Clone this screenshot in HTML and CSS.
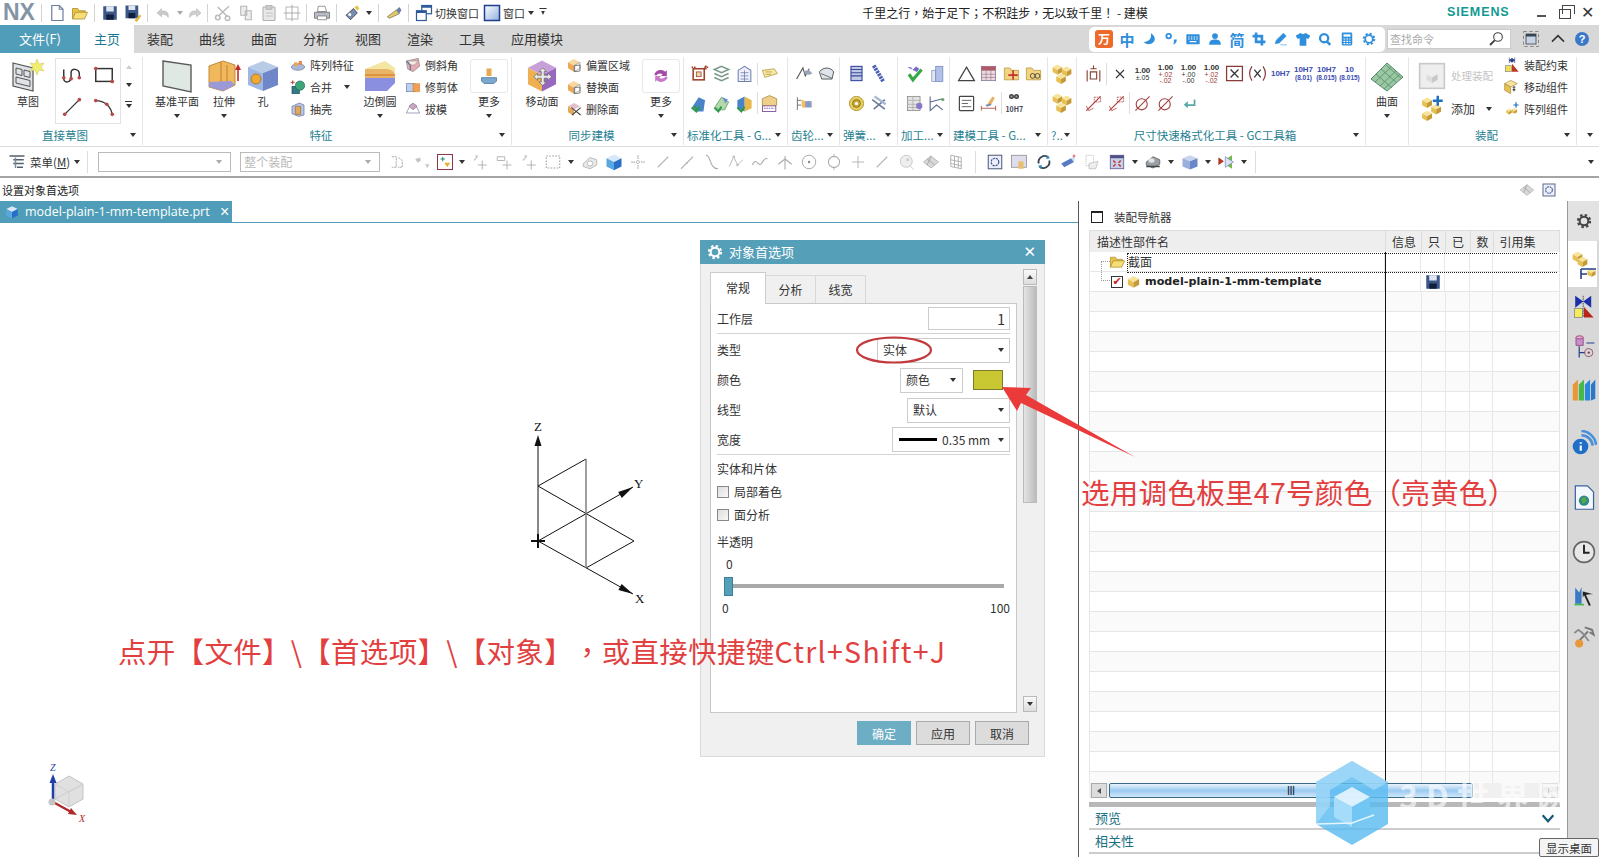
FILE: index.html
```html
<!DOCTYPE html>
<html lang="zh-CN">
<head>
<meta charset="utf-8">
<title>NX 建模</title>
<link rel="stylesheet" href="styles.css">
</head>
<body>
<svg class="defs" aria-hidden="true">
<defs>
<symbol id="cube" viewBox="0 0 24 24"><polygon points="12,3 21,8 12,13 3,8" fill="var(--a,#f7e49a)"/><polygon points="3,8 12,13 12,22 3,17" fill="var(--b,#e8c050)"/><polygon points="21,8 12,13 12,22 21,17" fill="var(--c,#c49a38)"/></symbol>
<symbol id="gear" viewBox="0 0 24 24"><circle cx="12" cy="12" r="9" fill="none" stroke="currentColor" stroke-width="3.4" stroke-dasharray="3.6 3.47"/><circle cx="12" cy="12" r="6.5" fill="none" stroke="currentColor" stroke-width="3"/></symbol>
<symbol id="doc" viewBox="0 0 24 24"><path d="M5 2h10l5 5v15H5z" fill="#fff" stroke="#6a7f9e" stroke-width="1.6"/><path d="M15 2v5h5" fill="none" stroke="#6a7f9e" stroke-width="1.4"/></symbol>
<symbol id="folder" viewBox="0 0 24 24"><path d="M2 20V6h7l2 3h8v3" fill="#e8c24a" stroke="#a88a20"/><path d="M2 20l4-9h16l-4 9z" fill="#f6dd7a" stroke="#a88a20"/></symbol>
<symbol id="save" viewBox="0 0 24 24"><rect x="3" y="3" width="18" height="18" fill="#3d5688"/><rect x="7" y="3" width="10" height="7" fill="#dfe6f2"/><rect x="7" y="14" width="10" height="7" fill="#10203c"/></symbol>
<symbol id="saveas" viewBox="0 0 24 24"><rect x="2" y="2" width="17" height="17" fill="#3d5688"/><rect x="6" y="2" width="9" height="6" fill="#dfe6f2"/><rect x="6" y="12" width="9" height="7" fill="#10203c"/><path d="M14 22l7-8 2 2-6 8z" fill="#e2b93c"/></symbol>
<symbol id="undo" viewBox="0 0 24 24"><path d="M19 18c1-7-3-10-9-8V6L4 12l6 5v-3c3-1 6 0 9 4z" fill="#c9c9c9" stroke="#aaa" stroke-width=".6"/></symbol>
<symbol id="redo" viewBox="0 0 24 24"><path d="M5 18c-1-7 3-10 9-8V6l6 6-6 5v-3c-3-1-6 0-9 4z" fill="#d0d0d0" stroke="#aaa" stroke-width=".6"/></symbol>
<symbol id="cut" viewBox="0 0 24 24"><path d="M20 3L7 15M5 4l12 12" stroke="#bbb" stroke-width="2" fill="none"/><circle cx="5" cy="18" r="3" fill="none" stroke="#bbb" stroke-width="2"/><circle cx="18" cy="19" r="3" fill="none" stroke="#bbb" stroke-width="2"/></symbol>
<symbol id="copy" viewBox="0 0 24 24"><path d="M5 3h8v12H5zM11 9h8v12h-8z" fill="#eee" stroke="#b5b5b5" stroke-width="1.4"/></symbol>
<symbol id="paste" viewBox="0 0 24 24"><rect x="4" y="4" width="16" height="18" rx="1" fill="#e8e8e8" stroke="#b0b0b0" stroke-width="1.4"/><rect x="8" y="2" width="8" height="5" fill="#ccc" stroke="#aaa"/><path d="M8 12h9M8 16h9" stroke="#b5b5b5"/></symbol>
<symbol id="movew" viewBox="0 0 24 24"><rect x="4" y="4" width="16" height="16" fill="none" stroke="#b5b5b5" stroke-width="1.3"/><path d="M12 1v22M1 12h22" stroke="#aaa" stroke-width="1.3"/></symbol>
<symbol id="print" viewBox="0 0 24 24"><path d="M7 3h9l2 7H6z" fill="#fff" stroke="#777"/><path d="M2 11h20v8H2z" fill="#b8bcc4" stroke="#666"/><path d="M6 16h12v5H6z" fill="#fff" stroke="#777"/></symbol>
<symbol id="wand" viewBox="0 0 24 24"><path d="M4 15l10-9 5 6-9 9z" fill="#7a8bb0" stroke="#334"/><path d="M15 4l4-2 3 4-3 3z" fill="#e8c84a"/><circle cx="9" cy="14" r="2" fill="#fff"/></symbol>
<symbol id="pen" viewBox="0 0 24 24"><path d="M3 17l12-9 4 5-13 6z" fill="#e2c766" stroke="#776"/><path d="M15 8l4-4 3 4-3 5z" fill="#6a7ea6"/></symbol>
<symbol id="wsw" viewBox="0 0 24 24"><rect x="9" y="2" width="13" height="11" fill="#fff" stroke="#2d5a98" stroke-width="1.6"/><rect x="2" y="9" width="13" height="13" fill="#fff" stroke="#2d5a98" stroke-width="1.6"/><rect x="2" y="9" width="13" height="3" fill="#2d5a98"/><rect x="9" y="2" width="13" height="3" fill="#2d5a98"/></symbol>
<symbol id="win" viewBox="0 0 24 24"><defs><linearGradient id="wg" x1="0" y1="0" x2="1" y2="1"><stop offset="0" stop-color="#fff"/><stop offset="1" stop-color="#8fb0e0"/></linearGradient></defs><rect x="2" y="2" width="20" height="20" fill="url(#wg)" stroke="#1f3f8a" stroke-width="2"/></symbol>
<symbol id="sgmoon" viewBox="0 0 24 24"><path d="M15 2c2 8-2 14-12 15 6 7 18 4 19-5 0-4-3-8-7-10z" fill="currentColor"/></symbol>
<symbol id="sgdots" viewBox="0 0 24 24"><circle cx="8" cy="7" r="4" fill="none" stroke="currentColor" stroke-width="3"/><path d="M17 13h5c0 4-2 7-6 9 1-3 1-5 1-9z" fill="currentColor"/></symbol>
<symbol id="sgkey" viewBox="0 0 24 24"><rect x="2" y="5" width="20" height="15" rx="1" fill="currentColor"/><path d="M5 9h2M9 9h2M13 9h2M17 9h2M5 12h2M9 12h2M13 12h2M17 12h2M7 16h10" stroke="#fff" stroke-width="1.8"/></symbol>
<symbol id="sgman" viewBox="0 0 24 24"><circle cx="12" cy="7" r="5" fill="currentColor"/><path d="M2 22c0-7 4-9 10-9s10 2 10 9z" fill="currentColor"/></symbol>
<symbol id="sgcrop" viewBox="0 0 24 24"><path d="M7 1v16h16M1 7h16v16" fill="none" stroke="currentColor" stroke-width="4.5"/></symbol>
<symbol id="sgpen" viewBox="0 0 24 24"><path d="M2 20l2-6L16 2l5 5L9 19zM11 22h11" fill="currentColor" stroke="currentColor"/></symbol>
<symbol id="sgshirt" viewBox="0 0 24 24"><path d="M8 3l4 2 4-2 7 4-3 5-3-1v11H7V11l-3 1-3-5z" fill="currentColor"/></symbol>
<symbol id="sgfind" viewBox="0 0 24 24"><circle cx="10.500" cy="10.500" r="7" fill="none" stroke="currentColor" stroke-width="4"/><path d="M15 16l6 6" stroke="currentColor" stroke-width="4.500"/></symbol>
<symbol id="sgcalc" viewBox="0 0 24 24"><rect x="3" y="1" width="18" height="22" rx="2" fill="currentColor"/><rect x="6" y="4" width="12" height="4" fill="#fff"/><path d="M6 12h3M11 12h3M16 12h2M6 16h3M11 16h3M16 16h2M6 20h3M11 20h3M16 20h2" stroke="#fff" stroke-width="2"/></symbol>
<symbol id="sketch" viewBox="0 0 34 34"><path d="M2 4l20 5v23L2 27z" fill="#dfe2e6" stroke="#555" stroke-width="1.2"/><path d="M5 9l6 1.5v6L5 15zM13 11l6 1.5v6l-6-1.5zM5 18l14 3.5v6L5 24z" fill="none" stroke="#555"/><path d="M26 0l2 5 5-1-3 4 3 4-5-1-2 5-2-5-5 1 3-4-3-4 5 1z" fill="#f0ee70" stroke="#c9c050" stroke-width=".5"/></symbol>
<symbol id="spline" viewBox="0 0 24 24"><path d="M3 6v10c0 5 8 5 8-2V9c0-5 9-4 9 2v4" fill="none" stroke="#333" stroke-width="1.6"/><circle cx="3" cy="15" r="2" fill="#b94a4a"/><circle cx="11" cy="16" r="2" fill="#b94a4a"/><circle cx="20" cy="15" r="2" fill="#b94a4a"/></symbol>
<symbol id="rect" viewBox="0 0 24 24"><rect x="3" y="5" width="18" height="14" fill="none" stroke="#333" stroke-width="1.6"/><circle cx="3" cy="5" r="2" fill="#b94a4a"/><circle cx="21" cy="19" r="2" fill="#b94a4a"/></symbol>
<symbol id="line" viewBox="0 0 24 24"><path d="M4 20L20 4" stroke="#333" stroke-width="1.4"/><circle cx="4" cy="20" r="2" fill="#b94a4a"/><circle cx="20" cy="4" r="2" fill="#b94a4a"/></symbol>
<symbol id="arc" viewBox="0 0 24 24"><path d="M3 5c9 0 17 6 18 16" fill="none" stroke="#333" stroke-width="1.4"/><circle cx="3" cy="5" r="2" fill="#b94a4a"/><circle cx="15" cy="9" r="2" fill="#b94a4a"/><circle cx="21" cy="20" r="2" fill="#b94a4a"/></symbol>
<symbol id="plane" viewBox="0 0 34 34"><path d="M3 2l28 4v27L3 27z" fill="#dfe8e2" stroke="#5b5b5b" stroke-width="1.4"/></symbol>
<symbol id="extrude" viewBox="0 0 34 34"><path d="M2 7l14-5 12 4v20l-12 6L2 28z" fill="#f0b85c" stroke="#c28a38"/><path d="M14 3v28M20 6v24" stroke="#c97c30" fill="none"/><path d="M2 28l14 4 12-6-4-4-22 1z" fill="#9a9ad8"/><path d="M31 22V9" stroke="#c02a2a" stroke-width="1.6"/><path d="M31 5l-3 6h6z" fill="#c02a2a"/></symbol>
<symbol id="hole" viewBox="0 0 34 34"><polygon points="17,2 32,8 17,14 2,8" fill="#b8cce8"/><polygon points="2,8 17,14 17,32 2,26" fill="#9db8e4"/><polygon points="32,8 17,14 17,32 32,26" fill="#6f86c8"/><circle cx="10" cy="20" r="5" fill="#eea838" stroke="#b97a20"/></symbol>
<symbol id="edge" viewBox="0 0 34 34"><path d="M2 10l20-8 10 7v10H2z" fill="#f2e6a0"/><path d="M2 10h20c6 0 10 2 10 9H2z" fill="#e8b46a"/><path d="M2 19h30v5l-8 8H2z" fill="#8b8fe0"/><path d="M2 16h30" stroke="#d98a30" stroke-width="1.5"/></symbol>
<symbol id="pat" viewBox="0 0 24 24"><ellipse cx="12" cy="15" rx="10" ry="5" fill="#a9b8d8" stroke="#6e7ea0"/><rect x="6" y="8" width="5" height="6" fill="#e8a850"/><rect x="13" y="6" width="5" height="6" fill="#e88a50"/></symbol>
<symbol id="unite" viewBox="0 0 24 24"><rect x="3" y="11" width="11" height="11" fill="#317c88" stroke="#1c5058"/><circle cx="15" cy="10" r="7" fill="#3fa67c" stroke="#1f6a4e"/><path d="M1 5h6M4 2v6" stroke="#c03030" stroke-width="1.4"/></symbol>
<symbol id="shell" viewBox="0 0 24 24"><path d="M3 8l11-5 7 3v15l-8 2-10-4z" fill="#b8c8e8" stroke="#5a6a90"/><path d="M8 8h8v12H8z" fill="#e2a860" stroke="#9a6a30"/></symbol>
<symbol id="cham" viewBox="0 0 24 24"><path d="M2 6l18-4 2 12-10 8-8-4z" fill="#e8a8b0" stroke="#888"/><path d="M4 6l16 0-6 6H8z" fill="#f4efe0" stroke="#999"/><path d="M2 6l6 6v8" stroke="#6a7a9a" stroke-width="2" fill="none"/></symbol>
<symbol id="trim" viewBox="0 0 24 24"><rect x="2" y="7" width="12" height="12" fill="#bcd0ee" stroke="#6a7ea8"/><rect x="12" y="7" width="10" height="12" fill="#f0a050" stroke="#c07028" stroke-dasharray="2 1"/></symbol>
<symbol id="dft" viewBox="0 0 24 24"><polygon points="8,6 16,6 22,18 2,18" fill="#fff" stroke="#8a8aa8" stroke-width="1.2"/><polygon points="12,3 18,8 12,13 6,8" fill="#c9a8c0" stroke="#8a6a88"/></symbol>
<symbol id="more1" viewBox="0 0 24 24"><rect x="9" y="3" width="6" height="9" fill="#e8a850"/><path d="M3 14h18v4l-3 3H6l-3-3z" fill="#7ba8cc" stroke="#4a7ca4"/></symbol>
<symbol id="movef" viewBox="0 0 46 46"><polygon points="23,2 42,12 23,22 4,12" fill="#c8a0d8"/><polygon points="4,12 23,22 23,44 4,34" fill="#eeb050"/><polygon points="42,12 23,22 23,44 42,34" fill="#9868c0"/><path d="M24 12l5 5h-3v5h5v-3l5 5-5 5v-3h-5v5h3l-5 5-5-5h3v-5h-5v3l-5-5 5-5v3h5v-5h-3z" fill="#e8e8e8" stroke="#666"/></symbol>
<symbol id="more2" viewBox="0 0 24 24"><path d="M4 11c1-6 9-8 13-4l2-2v7h-7l2-2c-3-2-6-1-7 1z" fill="#a648a8"/><path d="M20 13c-1 6-9 8-13 4l-2 2v-7h7l-2 2c3 2 6 1 7-1z" fill="#c878c8"/></symbol>
<symbol id="xoff" viewBox="0 0 24 24"><polygon points="12,3 21,8 12,13 3,8" fill="#f7d8a0"/><polygon points="3,8 12,13 12,22 3,17" fill="#eea858"/><polygon points="21,8 12,13 12,22 21,17" fill="#fff" stroke="#888"/><path d="M13 13l8-1v9l-8 1z" fill="none" stroke="#444"/></symbol>
<symbol id="xx" viewBox="0 0 24 24"><polygon points="12,3 21,8 12,13 3,8" fill="#e4c0c8"/><polygon points="3,8 12,13 12,22 3,17" fill="#e4a858"/><path d="M8 10l14 11M22 10L9 21" stroke="#444" stroke-width="1.6"/></symbol>
<symbol id="redbox" viewBox="0 0 24 24"><rect x="4" y="6" width="14" height="14" fill="none" stroke="#a0432c" stroke-width="2"/><rect x="8" y="10" width="6" height="6" fill="#e8d8b0" stroke="#a0432c"/><path d="M2 4h5M18 4h5M20 2v5" stroke="#a0432c" stroke-width="2" stroke-dasharray="2 1"/></symbol>
<symbol id="stack" viewBox="0 0 24 24"><path d="M3 7l9-4 9 4-9 4zM3 12l9 4 9-4M3 17l9 4 9-4" fill="none" stroke="#7a9a8a" stroke-width="2"/></symbol>
<symbol id="bldg" viewBox="0 0 24 24"><path d="M4 8l8-5 8 5v14H4z" fill="#eef" stroke="#6a80a8" stroke-width="1.3"/><path d="M7 11h10M7 15h10M7 19h10M12 8v14" stroke="#6a80a8"/></symbol>
<symbol id="tag" viewBox="0 0 24 24"><path d="M3 8l15-2 4 6-16 5z" fill="#f5e8a8" stroke="#b89a40"/><path d="M7 10h8M7 13h7" stroke="#b89a40"/></symbol>
<symbol id="gblu" viewBox="0 0 24 24"><path d="M3 16l8-12 8 4-2 14H8z" fill="#4a84c8"/><path d="M10 20l-5-5M2 17l6 5 4-6" stroke="#2e9a48" stroke-width="2.5" fill="none"/></symbol>
<symbol id="ggrn" viewBox="0 0 24 24"><path d="M4 16l8-12 9 6-5 10H8z" fill="#b4d8a8" stroke="#5a9a60"/><path d="M13 4l7 3-3 5z" fill="#6a8ad0"/><path d="M3 17l5 5 4-6" stroke="#2e9a48" stroke-width="2.5" fill="none"/></symbol>
<symbol id="gyel" viewBox="0 0 24 24"><polygon points="12,3 21,8 21,18 12,22" fill="#e8b848"/><polygon points="12,3 3,8 3,18 12,22" fill="#4a84c8"/><path d="M3 17l5 5 4-6" stroke="#2e9a48" stroke-width="2.5" fill="none"/></symbol>
<symbol id="ychk" viewBox="0 0 24 24"><polygon points="12,2 21,6 21,14 12,18 3,14 3,6" fill="#f0d088" stroke="#a88a40"/><rect x="3" y="15" width="17" height="7" fill="#fff" stroke="#6a3a8a"/><path d="M5 18h13" stroke="#6a3a8a" stroke-dasharray="2 1"/></symbol>
<symbol id="pt" viewBox="0 0 24 24"><path d="M2 19L10 5l3 10 5-9" fill="none" stroke="#555" stroke-width="1.4"/><path d="M12 9c5-3 8 0 10 3-4 2-7 2-10 0z" fill="#9aa6b8"/></symbol>
<symbol id="ptw" viewBox="0 0 24 24"><path d="M3 10c5-7 15-6 18 0l-2 9H6z" fill="#dfe4ec" stroke="#555" stroke-width="1.2"/><path d="M5 12l14 6" stroke="#555"/></symbol>
<symbol id="bars" viewBox="0 0 24 24"><rect x="5" y="3" width="14" height="18" fill="#c0c8e8" stroke="#3a4a98" stroke-width="1.4"/><path d="M5 7h14M5 11h14M5 15h14" stroke="#3a4a98" stroke-width="1.4"/></symbol>
<symbol id="spr" viewBox="0 0 24 24"><path d="M6 2l12 20" stroke="#4a60b8" stroke-width="5" stroke-dasharray="3 1"/></symbol>
<symbol id="nut" viewBox="0 0 24 24"><circle cx="12" cy="12" r="9" fill="#e8d060" stroke="#a08a20"/><circle cx="12" cy="12" r="5" fill="#c8a838" stroke="#806a10"/><circle cx="12" cy="12" r="2" fill="#fff"/></symbol>
<symbol id="hand" viewBox="0 0 24 24"><path d="M3 4v16M3 8h5M3 14h5" stroke="#555"/><rect x="12" y="9" width="9" height="8" fill="#8a9ac8"/><path d="M8 7l5 2v8H9z" fill="#f0c060"/></symbol>
<symbol id="sprx" viewBox="0 0 24 24"><path d="M4 7l16 12M20 7L6 19" stroke="#6a7a98" stroke-width="2"/><path d="M7 3l14 10" stroke="#a8b8d0" stroke-width="3"/></symbol>
<symbol id="grnchk" viewBox="0 0 24 24"><path d="M3 4l5 0 1 4 5-5 4 3-3 4z" fill="#7a6ac8"/><path d="M5 13l5 7L21 7" fill="none" stroke="#38a848" stroke-width="4"/></symbol>
<symbol id="stk" viewBox="0 0 24 24"><rect x="6" y="8" width="5" height="14" fill="#dfe6f0" stroke="#8a9ac0"/><rect x="11" y="3" width="9" height="19" fill="#b0c0e8" stroke="#7a8ac0"/></symbol>
<symbol id="tbl" viewBox="0 0 24 24"><rect x="3" y="3" width="16" height="18" fill="#e4e4e4" stroke="#888"/><path d="M3 8h16M3 13h16M3 17h16M10 3v18" stroke="#aaa"/><circle cx="18" cy="15" r="4" fill="#8a78c8"/></symbol>
<symbol id="tree" viewBox="0 0 24 24"><path d="M4 3v18l8-7 8 6M4 10l16-4" fill="none" stroke="#5a6a90" stroke-width="1.4"/><circle cx="20" cy="7" r="2" fill="#68a868"/></symbol>
<symbol id="tri" viewBox="0 0 24 24"><path d="M12 4L22 21H2z" fill="none" stroke="#444" stroke-width="1.6"/></symbol>
<symbol id="cal" viewBox="0 0 24 24"><rect x="3" y="3" width="18" height="18" fill="#f4d8d8" stroke="#7a7a9a"/><path d="M3 8h18M3 13h18M3 17h18M9 8v13M15 8v13" stroke="#8a7a9a" stroke-width=".8"/><rect x="3" y="3" width="18" height="5" fill="#b05a68"/></symbol>
<symbol id="fldplus" viewBox="0 0 24 24"><path d="M3 20V5h7l2 3h9v12z" fill="#f2d480" stroke="#b89a40"/><path d="M14 8v12M8 14h12" stroke="#c03030" stroke-width="2"/></symbol>
<symbol id="fldo" viewBox="0 0 24 24"><path d="M3 20V5h7l2 3h9v12z" fill="#f2d480" stroke="#b89a40"/><circle cx="11" cy="15" r="3" fill="none" stroke="#333"/><circle cx="17" cy="15" r="3" fill="none" stroke="#333"/></symbol>
<symbol id="note" viewBox="0 0 24 24"><rect x="3" y="3" width="18" height="18" rx="1" fill="#fff" stroke="#444" stroke-width="1.5"/><path d="M6 8h12M6 12h8M6 16h12" stroke="#444"/></symbol>
<symbol id="brsh" viewBox="0 0 24 24"><path d="M3 18h18M3 15v6M21 15v6" stroke="#a04030"/><path d="M11 12l6-9 3 2-5 9z" fill="#e8b060"/><path d="M8 14l6-2 2 2-6 2z" fill="#7a8aa8"/></symbol>
<symbol id="bino" viewBox="0 0 24 24"><circle cx="7" cy="7" r="5" fill="#444"/><circle cx="17" cy="7" r="5" fill="#444"/><circle cx="7" cy="7" r="2" fill="#aaa"/><circle cx="17" cy="7" r="2" fill="#aaa"/></symbol>
<symbol id="twins" viewBox="0 0 24 24"><use href="#cube" width="14" height="14" x="0" y="0"/><use href="#cube" width="14" height="14" x="10" y="2"/><use href="#cube" width="14" height="14" x="4" y="10"/></symbol>
<symbol id="dimx" viewBox="0 0 24 24"><path d="M4 22V8M20 22V8M8 6h8M8 10h8v9H8zM12 2v4" fill="none" stroke="#8a4030" stroke-width="1.4"/></symbol>
<symbol id="xmk" viewBox="0 0 24 24"><path d="M6 6l12 12M18 6L6 18" stroke="#333" stroke-width="1.7"/></symbol>
<symbol id="xbox" viewBox="0 0 24 24"><rect x="2" y="3" width="20" height="18" fill="#fff" stroke="#8a3a3a" stroke-width="1.6"/><path d="M7 7l10 10M17 7L7 17" stroke="#333" stroke-width="1.6"/></symbol>
<symbol id="xpar" viewBox="0 0 24 24"><path d="M5 3C1 9 1 15 5 21M19 3c4 6 4 12 0 18" fill="none" stroke="#8a3a3a" stroke-width="1.5"/><path d="M8 7l8 10M16 7L8 17" stroke="#333" stroke-width="1.6"/></symbol>
<symbol id="dia1" viewBox="0 0 24 24"><path d="M3 21L21 3" stroke="#b04040" stroke-width="1.6"/><path d="M3 15l3 6 6-3" stroke="#b04040" fill="none"/><path d="M13 4h8v6h-8z" fill="none" stroke="#b04040" stroke-dasharray="2 1"/></symbol>
<symbol id="dia2" viewBox="0 0 24 24"><circle cx="11" cy="13" r="7" fill="none" stroke="#a04040" stroke-width="1.4"/><path d="M3 21L21 3" stroke="#a04040" stroke-width="1.4"/></symbol>
<symbol id="ret" viewBox="0 0 24 24"><path d="M20 6v8H10V9l-7 6 7 6v-4h13V6z" fill="#58a8a8"/></symbol>
<symbol id="surf" viewBox="0 0 34 34"><path d="M1 20L17 4l16 14-16 14z" fill="#9ac8a0" stroke="#558a70"/><path d="M6 15l16 14M11 10l16 14M16 6l16 14M5 23l16-15M10 27l16-15M14 30l16-15" stroke="#558a70" stroke-width=".8"/></symbol>
<symbol id="gbox" viewBox="0 0 34 34"><rect x="2" y="2" width="30" height="30" fill="#eee" stroke="#c9c9c9" stroke-width="2"/><use href="#cube" width="18" height="18" x="8" y="9" class="gry"/></symbol>
<symbol id="addc" viewBox="0 0 34 34"><use href="#cube" width="16" height="16" x="3" y="1"/><use href="#cube" width="16" height="16" x="14" y="9"/><use href="#cube" width="16" height="16" x="3" y="17"/><path d="M24 1v12M18 7h12" stroke="#1f6fc0" stroke-width="3"/></symbol>
<symbol id="cons" viewBox="0 0 24 24"><path d="M12 2l-4 3 4 3 4-3zM8 1v8M16 1v8" fill="#2c3e88" stroke="#2c3e88"/><rect x="2" y="13" width="9" height="9" fill="#f0e050" stroke="#888"/><path d="M12 22V10l10 12z" fill="#c03428"/></symbol>
<symbol id="mvc" viewBox="0 0 24 24"><polygon points="10,2 20,7 10,12 1,7" fill="#f7e49a" stroke="#a88a40"/><polygon points="1,7 10,12 10,22 1,17" fill="#e8c050" stroke="#a88a40"/><path d="M15 10l3 3h-2v2h2l-3 4-3-4h2v-2h-2z" fill="#333" stroke="#fff" stroke-width=".6"/></symbol>
<symbol id="arrc" viewBox="0 0 24 24"><use href="#cube" width="11" height="11" x="2" y="10"/><use href="#cube" width="11" height="11" x="10" y="9"/><path d="M18 2v8M14 6h8" stroke="#1f6fc0" stroke-width="1.8"/></symbol>
<symbol id="menu" viewBox="0 0 24 24"><path d="M2 4h20M7 9h14M7 14h14M12 19h8" stroke="#506070" stroke-width="1.8"/><path d="M10 6v14" stroke="#7a8a98" stroke-width="2"/></symbol>
<symbol id="gtpl" viewBox="0 0 24 24"><path d="M5 5h6v14H5M14 6l5 4v9h-6" fill="none" stroke="#aaa" stroke-width="1.3" stroke-dasharray="3 1"/></symbol>
<symbol id="gtp2" viewBox="0 0 24 24"><path d="M3 8l6-2 2 4-5 3zM16 15h6l-3 5z" fill="#c6c6c6"/></symbol>
<symbol id="fbox" viewBox="0 0 24 24"><rect x="2" y="2" width="20" height="20" fill="#fff" stroke="#8a3a4a" stroke-width="1.4"/><path d="M6 8h6M9 5v6" stroke="#2a8a7a" stroke-width="1.4"/><path d="M11 13h8l-4 6z" fill="#e8b030"/></symbol>
<symbol id="gcross" viewBox="0 0 24 24"><path d="M4 10l5-6M9 4l-3 0M15 10v12M9 16h12" stroke="#b5b5b5" stroke-width="1.4" fill="none"/></symbol>
<symbol id="gcross2" viewBox="0 0 24 24"><path d="M3 5h10v5H3zM16 10v12M10 16h12" stroke="#b5b5b5" fill="none" stroke-width="1.3"/></symbol>
<symbol id="gdash" viewBox="0 0 24 24"><rect x="3" y="4" width="18" height="16" fill="none" stroke="#999" stroke-dasharray="2 2" stroke-width="1.4"/></symbol>
<symbol id="gdisk" viewBox="0 0 24 24"><path d="M3 14l9-8 9 3v7l-9 5-9-3z" fill="#e8e8e8" stroke="#aaa"/><circle cx="12" cy="14" r="3.5" fill="#fff" stroke="#aaa"/></symbol>
<symbol id="bcube" viewBox="0 0 24 24"><polygon points="12,2 22,7 12,12 2,7" fill="#d8e8f8"/><polygon points="2,7 12,12 12,23 2,18" fill="#58a8e0"/><polygon points="22,7 12,12 12,23 22,18" fill="#2a6ec8"/></symbol>
<symbol id="gnet" viewBox="0 0 24 24"><path d="M12 3v5M12 16v5M3 12h5M16 12h5" stroke="#bbb" stroke-width="2" stroke-dasharray="2 1"/><circle cx="12" cy="12" r="2" fill="none" stroke="#aaa"/></symbol>
<symbol id="gln" viewBox="0 0 24 24"><path d="M5 19L19 5" stroke="#b5b5b5" stroke-width="1.5"/></symbol>
<symbol id="gln2" viewBox="0 0 24 24"><path d="M4 21L20 5" stroke="#b5b5b5" stroke-width="1.5"/><circle cx="12" cy="13" r="1.5" fill="#bbb"/></symbol>
<symbol id="gtan" viewBox="0 0 24 24"><path d="M4 3c7 0 4 18 16 18" fill="none" stroke="#aaa" stroke-width="1.5"/></symbol>
<symbol id="gpts" viewBox="0 0 24 24"><path d="M3 18L9 5l5 11 7-7" fill="none" stroke="#bbb" stroke-width="1.3"/><circle cx="9" cy="5" r="1.6" fill="#bbb"/><circle cx="14" cy="16" r="1.6" fill="#bbb"/></symbol>
<symbol id="gwav" viewBox="0 0 24 24"><path d="M2 16c5-12 8 4 12-2s5-8 8-6" fill="none" stroke="#aaa" stroke-width="1.5"/></symbol>
<symbol id="gfan" viewBox="0 0 24 24"><path d="M12 4v18M12 8L3 15M12 8l9 7" fill="none" stroke="#aaa" stroke-width="1.4"/></symbol>
<symbol id="gcir" viewBox="0 0 24 24"><circle cx="12" cy="12" r="9" fill="none" stroke="#aaa" stroke-width="1.3"/><circle cx="12" cy="12" r="1.6" fill="#888"/></symbol>
<symbol id="gcir2" viewBox="0 0 24 24"><circle cx="12" cy="12" r="7.5" fill="none" stroke="#aaa" stroke-width="1.4"/><path d="M12 1v5M12 18v5" stroke="#aaa"/></symbol>
<symbol id="gplus" viewBox="0 0 24 24"><path d="M12 4v16M4 12h16" stroke="#b5b5b5" stroke-width="1.3"/></symbol>
<symbol id="gsph" viewBox="0 0 24 24"><circle cx="11" cy="11" r="8" fill="#eee" stroke="#bbb"/><circle cx="13" cy="9" r="2" fill="#ccc"/><path d="M16 17l5 5" stroke="#bbb"/></symbol>
<symbol id="gplt" viewBox="0 0 24 24"><path d="M2 12l10-8 10 8-10 8z" fill="#d8d8d8" stroke="#aaa"/><path d="M7 8l10 8M12 4l-5 12" stroke="#999"/></symbol>
<symbol id="gtab" viewBox="0 0 24 24"><path d="M5 3l14 3v15l-14-3zM5 9l14 3M5 14l14 3M10 4v15M15 5v15" fill="none" stroke="#aaa" stroke-width="1.2"/></symbol>
<symbol id="view" viewBox="0 0 24 24"><rect x="3" y="3" width="18" height="18" fill="#eef" stroke="#506078" stroke-width="1.4"/><circle cx="12" cy="12" r="5" fill="none" stroke="#3a5a88" stroke-width="1.6" stroke-dasharray="3 1"/></symbol>
<symbol id="vhand" viewBox="0 0 24 24"><rect x="2" y="3" width="20" height="16" fill="#dde" stroke="#888"/><path d="M11 11h7v10h-7z" fill="#e8c070"/></symbol>
<symbol id="rot" viewBox="0 0 24 24"><path d="M5 14a8 8 0 0 1 13-8" fill="none" stroke="#37474f" stroke-width="2.4"/><path d="M19 10a8 8 0 0 1-13 8" fill="none" stroke="#37474f" stroke-width="2.4"/><path d="M16 3l4 4-5 1zM8 21l-4-4 5-1z" fill="#2a88c8"/></symbol>
<symbol id="bshape" viewBox="0 0 24 24"><path d="M3 14l13-7 4 5-13 7z" fill="#5a7ac8"/><path d="M16 7l4 5 1-7z" fill="#c8d8f0"/><path d="M20 2v4M18 4h4" stroke="#e03030"/></symbol>
<symbol id="gsq" viewBox="0 0 24 24"><path d="M4 3h10v14H4z" fill="none" stroke="#bbb" stroke-dasharray="2 1"/><path d="M8 14l12-3-3 10H8z" fill="#eee" stroke="#bbb"/></symbol>
<symbol id="fit" viewBox="0 0 24 24"><rect x="3" y="3" width="18" height="18" fill="#c8d0e8" stroke="#50508a"/><rect x="3" y="3" width="18" height="4" fill="#50508a"/><path d="M7 10l3 3M17 10l-3 3M7 18l3-3M17 18l-3-3" stroke="#c03030" stroke-width="1.8"/></symbol>
<symbol id="hat" viewBox="0 0 24 24"><path d="M3 12l9-7 9 4v6l-9 5-9-4z" fill="#9aa0a8" stroke="#555"/><ellipse cx="10" cy="10" rx="4" ry="3" fill="#e4e4e4"/><path d="M3 18h18" stroke="#444" stroke-width="2"/></symbol>
<symbol id="bl" viewBox="0 0 24 24"><polygon points="12,3 22,7 12,11 2,7" fill="#c8d4ee"/><polygon points="2,7 12,11 12,22 2,18" fill="#9ab0dc"/><polygon points="22,7 12,11 12,22 22,18" fill="#6a88c8"/></symbol>
<symbol id="fly" viewBox="0 0 24 24"><path d="M2 6l7 5-7 5zM12 8l8-5v18l-8-5z" fill="#78b848"/><path d="M2 6l7 5-7 5z" fill="#c03030"/><path d="M11 5l11 7-11 7-0-14z" fill="#dbe4f4" stroke="#7a8ac0"/></symbol>
<symbol id="nav1" viewBox="0 0 30 30"><use href="#cube" width="13" height="13" x="3" y="1"/><use href="#cube" width="13" height="13" x="8" y="6"/><use href="#cube" width="11" height="11" x="18" y="18"/><path d="M13 20v10M13 25h6M13 20h15" stroke="#24408a" stroke-width="1.6"/></symbol>
<symbol id="nav2" viewBox="0 0 30 30"><path d="M4 1l10 7L24 1v15L14 8 4 16z" fill="#1c2ea8"/><rect x="3" y="17" width="10" height="11" fill="#f4ec58" stroke="#888"/><path d="M15 28V15l12 13z" fill="#b82418"/><path d="M14 1v27" stroke="#333" stroke-dasharray="2 1"/></symbol>
<symbol id="nav3" viewBox="0 0 30 30"><path d="M5 3h9v10H5z" fill="#c890c8" stroke="#8a3a78"/><ellipse cx="9.500" cy="3" rx="4.500" ry="2" fill="#e8a8c8" stroke="#8a3a78"/><path d="M18 10h10M9 14v14M9 22h7" stroke="#24408a" stroke-width="1.5"/><circle cx="21" cy="22" r="5" fill="none" stroke="#8a3a58"/><circle cx="21" cy="22" r="1.500" fill="#8a3a58"/></symbol>
<symbol id="nav4" viewBox="0 0 30 30"><path d="M2 9l6-6v24H2z" fill="#e89838"/><path d="M9 9l6-6v24H9z" fill="#48b848"/><path d="M16 9l6-6v24h-6z" fill="#2a88d8"/><path d="M23 9l5-6v22l-5 2z" fill="#2a78c8"/></symbol>
<symbol id="nav5" viewBox="0 0 30 30"><circle cx="11" cy="19" r="9" fill="#1f6fc8"/><path d="M10 14h2.500v2h-2.500zM10 18h2.500v6h-2.500z" fill="#fff"/><path d="M12 6a13 13 0 0 1 13 12M12 1a18 18 0 0 1 17 16" fill="none" stroke="#4a90d8" stroke-width="3"/></symbol>
<symbol id="nav6" viewBox="0 0 30 30"><path d="M5 1h14l7 7v20H5z" fill="#f4f8fc" stroke="#3a60a0" stroke-width="1.4"/><circle cx="15" cy="18" r="6" fill="#2f8a8a"/><path d="M12 15l5-1 1 5-5 3z" fill="#58a848"/></symbol>
<symbol id="nav7" viewBox="0 0 30 30"><circle cx="15" cy="15" r="13" fill="#e8e8e8" stroke="#666" stroke-width="2"/><path d="M15 6v10h7" fill="none" stroke="#222" stroke-width="2.4"/></symbol>
<symbol id="nav8" viewBox="0 0 30 30"><path d="M4 26V6l5 6 3-7v21z" fill="#3a78c8"/><path d="M3 27h12" stroke="#48b848" stroke-width="2"/><path d="M13 10l15 4-10 1 6 13-3 1-6-13-2 4z" fill="#222" stroke="#fff" stroke-width=".6"/></symbol>
<symbol id="nav9" viewBox="0 0 30 30"><path d="M5 24L20 8M16 3l9 3 2 6-5-3" fill="none" stroke="#777" stroke-width="2.4"/><circle cx="9" cy="23" r="5" fill="#e89838"/><path d="M3 10l5-4 5 4 8 10" fill="none" stroke="#888" stroke-width="2.2"/></symbol>
</defs>
</svg>

<header class="titlebar">
  <span class="nx">NX</span><i class="sep"></i>
  <span class="s"><svg class="ic"><use href="#doc"/></svg></span><span class="s"><svg class="ic"><use href="#folder"/></svg></span><i class="sep"></i>
  <span class="s"><svg class="ic"><use href="#save"/></svg></span><span class="s"><svg class="ic"><use href="#saveas"/></svg></span><i class="sep"></i>
  <span class="s"><svg class="ic"><use href="#undo"/></svg></span><span class="s-c"><i class="car gc"></i></span><span class="s-n"><svg class="ic"><use href="#redo"/></svg></span><i class="sep"></i>
  <span class="s"><svg class="ic"><use href="#cut"/></svg></span><span class="s"><svg class="ic"><use href="#copy"/></svg></span><span class="s"><svg class="ic"><use href="#paste"/></svg></span><span class="s"><svg class="ic"><use href="#movew"/></svg></span><i class="sep"></i>
  <span class="s"><svg class="ic"><use href="#print"/></svg></span><i class="sep"></i>
  <span class="s"><svg class="ic"><use href="#wand"/></svg></span><span class="s-c"><i class="car"></i></span><i class="sep"></i>
  <span class="s"><svg class="ic"><use href="#pen"/></svg></span><i class="sep"></i>
  <span class="s"><svg class="ic"><use href="#wsw"/></svg></span><span class="qt">切换窗口</span>
  <span class="s"><svg class="ic"><use href="#win"/></svg></span><span class="qt qt2">窗口</span><span class="s-c"><i class="car"></i></span><span class="s-d"><i class="car"></i></span>
  <span class="appt" lang="zh-Hant">千里之行，始于足下；不积跬步，无以致千里！ - 建模</span>
  <span class="siemens">SIEMENS</span>
  <span class="wc"><i class="wmin"></i><i class="wres"></i><i class="wx">✕</i></span>
</header>

<nav class="tabbar">
  <span class="tab file">文件(F)</span><span class="tab on">主页</span><span class="tab">装配</span><span class="tab">曲线</span><span class="tab">曲面</span><span class="tab">分析</span><span class="tab">视图</span><span class="tab">渲染</span><span class="tab">工具</span><span class="tab">应用模块</span>
  <div class="tabr">
    <div class="sogou">
      <span class="sglogo">万</span><span class="sg zh">中</span>
      <span class="sg"><svg class="ic14"><use href="#sgmoon"/></svg></span><span class="sg"><svg class="ic14"><use href="#sgdots"/></svg></span><span class="sg"><svg class="ic16"><use href="#sgkey"/></svg></span><span class="sg"><svg class="ic14"><use href="#sgman"/></svg></span><span class="sg zh">简</span><span class="sg"><svg class="ic14"><use href="#sgcrop"/></svg></span><span class="sg"><svg class="ic14"><use href="#sgpen"/></svg></span><span class="sg"><svg class="ic16"><use href="#sgshirt"/></svg></span><span class="sg"><svg class="ic14"><use href="#sgfind"/></svg></span><span class="sg"><svg class="ic14"><use href="#sgcalc"/></svg></span><span class="sg"><svg class="ic14"><use href="#gear"/></svg></span>
    </div>
    <div class="search"><span>查找命令</span><svg class="ic16" viewBox="0 0 24 24"><circle cx="15" cy="9" r="6.500" fill="#fff" stroke="#444" stroke-width="1.600"/><path d="M10 14l-7 7" stroke="#444" stroke-width="3"/></svg></div>
    <svg class="ic20 rb1" viewBox="0 0 24 24"><rect x="3" y="3" width="18" height="18" fill="none" stroke="#777" stroke-dasharray="4 3"/><rect x="6" y="6" width="12" height="12" fill="#c8d4e4" stroke="#445"/><rect x="6" y="6" width="12" height="3" fill="#345"/></svg>
    <svg class="ic16 rb2" viewBox="0 0 24 24"><path d="M3 16l9-9 9 9" fill="none" stroke="#333" stroke-width="2.400"/></svg>
    <span class="help">?</span>
  </div>
</nav>

<section class="ribbon">
  <div class="g g1">
    <div class="gb pl1">
      <div class="big w-sk"><svg class="ic34"><use href="#sketch"/></svg><span>草图</span></div>
      <div class="skbox"><svg class="ic22"><use href="#spline"/></svg><svg class="ic22"><use href="#rect"/></svg><svg class="ic22"><use href="#line"/></svg><svg class="ic22"><use href="#arc"/></svg></div>
      <div class="scr"><i class="cup"></i><i class="car"></i><i class="cov"></i></div>
    </div>
    <div class="gf"><span class="gl">直接草图</span><i class="car"></i></div>
  </div>
  <div class="g g2">
    <div class="gb pl2">
      <div class="big w54"><svg class="ic34"><use href="#plane"/></svg><span>基准平面</span><i class="car"></i></div>
      <div class="big w40"><svg class="ic34"><use href="#extrude"/></svg><span>拉伸</span><i class="car"></i></div>
      <div class="big w38"><svg class="ic34"><use href="#hole"/></svg><span>孔</span></div>
      <div class="lst w76 ml8"><div><svg class="ic16"><use href="#pat"/></svg>阵列特征</div><div><svg class="ic16"><use href="#unite"/></svg>合并<i class="car c8"></i></div><div><svg class="ic16"><use href="#shell"/></svg>抽壳</div></div>
      <div class="big w44"><svg class="ic34"><use href="#edge"/></svg><span>边倒圆</span><i class="car"></i></div>
      <div class="lst w66 ml3"><div><svg class="ic16"><use href="#cham"/></svg>倒斜角</div><div><svg class="ic16"><use href="#trim"/></svg>修剪体</div><div><svg class="ic16"><use href="#dft"/></svg>拔模</div></div>
      <div class="big w38 ml3"><span class="mbox"><svg class="ic20"><use href="#more1"/></svg></span><span>更多</span><i class="car"></i></div>
    </div>
    <div class="gf"><span class="gl">特征</span><i class="car"></i></div>
  </div>
  <div class="g g3">
    <div class="gb pl3">
      <div class="big w48"><svg class="ic34"><use href="#movef"/></svg><span>移动面</span></div>
      <div class="lst w76"><div><svg class="ic16"><use href="#xoff"/></svg>偏置区域</div><div><svg class="ic16"><use href="#xoff"/></svg>替换面</div><div><svg class="ic16"><use href="#xx"/></svg>删除面</div></div>
      <div class="big w38 ml8"><span class="mbox"><svg class="ic20"><use href="#more2"/></svg></span><span>更多</span><i class="car"></i></div>
    </div>
    <div class="gf"><span class="gl">同步建模</span><i class="car"></i></div>
  </div>
  <div class="g g4">
    <div class="gi pl4">
      <div class="ir"><span class="q"><svg class="ic"><use href="#redbox"/></svg></span><span class="q"><svg class="ic"><use href="#stack"/></svg></span><span class="q"><svg class="ic"><use href="#bldg"/></svg></span><i class="vs"></i><span class="q"><svg class="ic"><use href="#tag"/></svg></span></div>
      <div class="ir"><span class="q"><svg class="ic"><use href="#gblu"/></svg></span><span class="q"><svg class="ic"><use href="#ggrn"/></svg></span><span class="q"><svg class="ic"><use href="#gyel"/></svg></span><i class="vs"></i><span class="q"><svg class="ic"><use href="#ychk"/></svg></span></div>
    </div>
    <div class="gf gfl"><span class="gl">标准化工具 - G...</span><i class="car"></i></div>
  </div>
  <div class="g g5">
    <div class="gi pl5">
      <div class="ir"><span class="q"><svg class="ic"><use href="#pt"/></svg></span><span class="q"><svg class="ic"><use href="#ptw"/></svg></span></div>
      <div class="ir"><span class="q"><svg class="ic"><use href="#hand"/></svg></span></div>
    </div>
    <div class="gf gfl"><span class="gl">齿轮...</span><i class="car"></i></div>
  </div>
  <div class="g g6">
    <div class="gi pl6">
      <div class="ir"><span class="q"><svg class="ic"><use href="#bars"/></svg></span><span class="q"><svg class="ic"><use href="#spr"/></svg></span></div>
      <div class="ir"><span class="q"><svg class="ic"><use href="#nut"/></svg></span><span class="q"><svg class="ic"><use href="#sprx"/></svg></span></div>
    </div>
    <div class="gf gfl"><span class="gl">弹簧...</span><i class="car"></i></div>
  </div>
  <div class="g g7">
    <div class="gi pl7">
      <div class="ir"><span class="q"><svg class="ic"><use href="#grnchk"/></svg></span><span class="q"><svg class="ic"><use href="#stk"/></svg></span></div>
      <div class="ir"><span class="q"><svg class="ic"><use href="#tbl"/></svg></span><span class="q"><svg class="ic"><use href="#tree"/></svg></span></div>
    </div>
    <div class="gf gfl"><span class="gl">加工...</span><i class="car"></i></div>
  </div>
  <div class="g g8">
    <div class="gi pl8">
      <div class="ir"><span class="q"><svg class="ic"><use href="#tri"/></svg></span><span class="q"><svg class="ic"><use href="#cal"/></svg></span><span class="q"><svg class="ic"><use href="#fldplus"/></svg></span><span class="q"><svg class="ic"><use href="#fldo"/></svg></span></div>
      <div class="ir"><span class="q"><svg class="ic"><use href="#note"/></svg></span><span class="q"><svg class="ic"><use href="#brsh"/></svg></span><i class="vs"></i><span class="q lbl"><svg class="ic12"><use href="#bino"/></svg><b>10H7</b></span></div>
    </div>
    <div class="gf gfl"><span class="gl">建模工具 - G...</span><i class="car"></i></div>
  </div>
  <div class="g g9">
    <div class="gi pl9">
      <div class="ir"><span class="q"><svg class="ic22"><use href="#twins"/></svg></span></div>
      <div class="ir"><span class="q"><svg class="ic22"><use href="#twins"/></svg></span></div>
    </div>
    <div class="gf gfl"><span class="gl">?..</span><i class="car"></i></div>
  </div>
  <div class="g g10">
    <div class="gi pl10">
      <div class="ir"><span class="q"><svg class="ic"><use href="#dimx"/></svg></span><i class="vs"></i><span class="q"><svg class="ic16"><use href="#xmk"/></svg></span>
        <span class="q tol">1.00<b>±.05</b></span><span class="q tol">1.00<b class="r">+.02<br>-.02</b></span><span class="q tol">1.00<b>+.00<br>-.00</b></span><span class="q tol">1.00<b class="r">+.02<br>-.02</b></span>
        <span class="q"><svg class="ic"><use href="#xbox"/></svg></span><span class="q"><svg class="ic"><use href="#xpar"/></svg></span>
        <span class="q fit">10H7</span><span class="q fit2">10H7<b>(8.01)</b></span><span class="q fit2">10H7<b>(8.015)</b></span><span class="q fit2">10<b>(8.015)</b></span></div>
      <div class="ir"><span class="q"><svg class="ic"><use href="#dia1"/></svg></span><span class="q"><svg class="ic"><use href="#dia1"/></svg></span><i class="vs"></i><span class="q"><svg class="ic"><use href="#dia2"/></svg></span><span class="q"><svg class="ic"><use href="#dia2"/></svg></span><span class="q"><svg class="ic14"><use href="#ret"/></svg></span></div>
    </div>
    <div class="gf"><span class="gl">尺寸快速格式化工具 - GC工具箱</span><i class="car"></i></div>
  </div>
  <div class="g g11">
    <div class="gb"><div class="big wfull"><svg class="ic34"><use href="#surf"/></svg><span>曲面</span><i class="car"></i></div></div>
    <div class="gf gfn"></div>
  </div>
  <div class="g g12">
    <div class="gb pl12">
      <div class="asl">
        <div class="asr dis"><svg class="ic28"><use href="#gbox"/></svg>处理装配</div>
        <div class="asr"><svg class="ic28"><use href="#addc"/></svg>添加<i class="car c10"></i></div>
      </div>
      <div class="lst"><div><svg class="ic16"><use href="#cons"/></svg>装配约束</div><div><svg class="ic16"><use href="#mvc"/></svg>移动组件</div><div><svg class="ic16"><use href="#arrc"/></svg>阵列组件</div></div>
    </div>
    <div class="gf"><span class="gl">装配</span><i class="car"></i></div>
  </div>
  <div class="g g13">
    <div class="gb"></div>
    <div class="gf"><span class="gl"></span><i class="car"></i></div>
  </div>
</section>

<section class="toolbar">
  <svg class="ic menuic"><use href="#menu"/></svg><span class="mtxt">菜单(<u>M</u>)</span><i class="car c7"></i><i class="vb"></i>
  <span class="cb cb1"><i class="car gc"></i></span><span class="cb cb2">整个装配<i class="car gc"></i></span>
  <span class="tb tb-s"><svg class="ic"><use href="#gtpl"/></svg></span><span class="tb"><svg class="ic"><use href="#gtp2"/></svg></span><span class="tb tb-n"><svg class="ic"><use href="#fbox"/></svg></span><span class="tc"><i class="car"></i></span>
  <span class="tb"><svg class="ic"><use href="#gcross"/></svg></span><span class="tb"><svg class="ic"><use href="#gcross2"/></svg></span><span class="tb"><svg class="ic"><use href="#gcross"/></svg></span><span class="tb"><svg class="ic"><use href="#gdash"/></svg></span><span class="tc"><i class="car"></i></span><span class="tb"><svg class="ic"><use href="#gdisk"/></svg></span><span class="tb"><svg class="ic"><use href="#bcube"/></svg></span>
  <span class="tb"><svg class="ic"><use href="#gnet"/></svg></span><span class="tb"><svg class="ic"><use href="#gln"/></svg></span><span class="tb"><svg class="ic"><use href="#gln2"/></svg></span><span class="tb"><svg class="ic"><use href="#gtan"/></svg></span><span class="tb"><svg class="ic"><use href="#gpts"/></svg></span><span class="tb"><svg class="ic"><use href="#gwav"/></svg></span><span class="tb"><svg class="ic"><use href="#gfan"/></svg></span><span class="tb"><svg class="ic"><use href="#gcir"/></svg></span><span class="tb"><svg class="ic"><use href="#gcir2"/></svg></span><span class="tb"><svg class="ic"><use href="#gplus"/></svg></span><span class="tb"><svg class="ic"><use href="#gln"/></svg></span><span class="tb"><svg class="ic"><use href="#gsph"/></svg></span><span class="tb"><svg class="ic"><use href="#gplt"/></svg></span><span class="tb"><svg class="ic"><use href="#gtab"/></svg></span><i class="vb vb2"></i>
  <span class="tb"><svg class="ic"><use href="#view"/></svg></span><span class="tb"><svg class="ic"><use href="#vhand"/></svg></span><span class="tb"><svg class="ic"><use href="#rot"/></svg></span><span class="tb"><svg class="ic"><use href="#bshape"/></svg></span><span class="tb"><svg class="ic"><use href="#gsq"/></svg></span><span class="tb"><svg class="ic"><use href="#fit"/></svg></span><span class="tc"><i class="car"></i></span><span class="tb"><svg class="ic"><use href="#hat"/></svg></span><span class="tc"><i class="car"></i></span><span class="tb"><svg class="ic"><use href="#bl"/></svg></span><span class="tc"><i class="car"></i></span><span class="tb"><svg class="ic"><use href="#fly"/></svg></span><span class="tc"><i class="car"></i></span><i class="vb vb3"></i>
  <i class="car tail"></i>
</section>

<div class="status"><span>设置对象首选项</span><span class="stat-r"><svg class="ic16"><use href="#gplt"/></svg><svg class="ic16 ms"><use href="#view"/></svg></span></div>

<main class="work">
  <div class="left">
    <div class="dtabs"><div class="dtab"><svg class="ic14"><use href="#bcube"/></svg><span class="dname">model-plain-1-mm-template.prt</span><span class="dx">×</span></div></div>
    <div class="canvas"></div>
  </div>
  <aside class="panel">
    <div class="phead"><i class="pbox"></i><span>装配导航器</span></div>
    <div class="thead cols"><span>描述性部件名</span><span>信息</span><span>只</span><span>已</span><span>数</span><span>引用集</span></div>
    <div class="tbody">
      <div class="trow cols"><span class="name"><svg class="ic17"><use href="#folder"/></svg><span class="sec">截面</span></span><span></span><span></span><span></span><span></span><span></span></div>
      <div class="trow cols"><span class="name name2"><i class="chk">✔</i><svg class="ic15"><use href="#cube"/></svg><b>model-plain-1-mm-template</b></span><span></span><span class="cs"><svg class="ic18"><use href="#save"/></svg></span><span></span><span></span><span></span></div>
      <div class="fill"></div>
      <i class="selbox"></i><i class="twig"></i>
      <i class="blk"></i>
    </div>
    <div class="hsb"><span class="hbtn"><i class="hl"></i></span><span class="hth">|||</span><span class="hbtn hr"><i class="hrr"></i></span></div>
    <div class="gbar"></div>
    <div class="sect s1"><span>预览</span><svg class="ic16" viewBox="0 0 24 24"><path d="M4 8l8 9 8-9" fill="none" stroke="#1d5a78" stroke-width="3.400"/></svg></div>
    <div class="sect"><span>相关性</span></div>
  </aside>
  <div class="side">
    <span class="sgear"><svg class="ic16"><use href="#gear"/></svg></span>
    <span class="sact"><svg class="ic30"><use href="#nav1"/></svg></span>
    <span><svg class="ic24"><use href="#nav2"/></svg></span>
    <span><svg class="ic24"><use href="#nav3"/></svg></span>
    <span><svg class="ic26"><use href="#nav4"/></svg></span>
    <span><svg class="ic26"><use href="#nav5"/></svg></span>
    <span><svg class="ic26"><use href="#nav6"/></svg></span>
    <span><svg class="ic24"><use href="#nav7"/></svg></span>
    <span><svg class="ic24"><use href="#nav8"/></svg></span>
    <span><svg class="ic24"><use href="#nav9"/></svg></span>
  </div>
</main>

<svg class="triad" viewBox="0 0 140 200">
  <g stroke="#111" stroke-width="1" fill="none">
    <path d="M18 130V28"/><path d="M18 76L114 131"/><path d="M18 76L66 49"/><path d="M18 131L113 77"/><path d="M18 131L113 184"/><path d="M114 131L66 158"/>
    <path d="M66 49V158" stroke="#777" stroke-width="1.400"/>
    <path d="M11 131h14M18 124v14" stroke-width="2"/>
  </g>
  <path d="M18 25l-3.500 11h7z" fill="#111"/><polygon points="113,77 101.800,88 98.200,82" fill="#111"/><polygon points="113,184 98.400,180 101.600,174" fill="#111"/>
  <text x="14" y="21" class="tt">Z</text><text x="114" y="78" class="tt">Y</text><text x="115" y="193" class="tt">X</text>
</svg>

<svg class="mini" viewBox="0 0 70 80">
  <polygon points="39,26 53,34 53,49 39,57 25,49 25,34" fill="#e0e0e0" stroke="#c4c4c4"/>
  <path d="M25 34l14 8 14-8M39 42v15M25 49l28-15" stroke="#cfcfcf" fill="none"/>
  <path d="M23 52V32" stroke="#1f3fa8" stroke-width="2.500"/><path d="M23 24l-3.500 9h7z" fill="#1f3fa8"/>
  <path d="M23 52l20 11" stroke="#b02a2a" stroke-width="2.500"/><path d="M47 65l-9-1 3-6z" fill="#b02a2a"/>
  <circle cx="22" cy="52" r="3.500" fill="#c4c4c4"/>
  <text x="20" y="21" class="mt mz">Z</text><text x="49" y="72" class="mt mx">X</text>
</svg>

<section class="dlg">
  <div class="dt"><svg class="ic16"><use href="#gear"/></svg><span>对象首选项</span><b>✕</b></div>
  <div class="dbody">
    <div class="dmain">
      <div class="dtb"><span class="on">常规</span><span>分析</span><span>线宽</span></div>
      <div class="dp">
        <div class="dr dr1"><label>工作层</label><span class="inp">1</span></div>
        <div class="dr"><label>类型</label><span class="sel w133">实体<i class="car"></i></span></div>
        <div class="dr"><label>颜色</label><span class="sel w63">颜色<i class="car"></i></span><span class="sw"></span></div>
        <div class="dr"><label>线型</label><span class="sel w103">默认<i class="car"></i></span></div>
        <div class="dr dr5"><label>宽度</label><span class="sel w118"><i class="thick"></i>0.35 mm<i class="car"></i></span></div>
        <div class="dh">实体和片体</div>
        <div class="dc"><i class="cbx"></i>局部着色</div>
        <div class="dc"><i class="cbx"></i>面分析</div>
        <div class="dl">半透明</div>
        <div class="dv">0</div>
        <div class="slider"><i></i></div>
        <div class="dmm"><span>0</span><span>100</span></div>
      </div>
    </div>
    <div class="dscr"><span class="sbtn"><i class="au"></i></span><span class="sth"></span><span class="sbtn sd"><i class="car"></i></span></div>
  </div>
  <div class="dbtn"><span class="ok">确定</span><span>应用</span><span>取消</span></div>
</section>

<svg class="anno" viewBox="0 0 1599 857" aria-hidden="true">
  <ellipse cx="894" cy="350" rx="37" ry="12.500" fill="none" stroke="#c33a3e" stroke-width="2.200"/>
  <polygon points="1002,387 1031,388 1026,395 1135,457 1021,403 1017,411" fill="#ea3a3a"/>
</svg>
<div class="note nt1" lang="zh-Hant">选用调色板里47号颜色（亮黄色）</div>
<div class="note nt2" lang="zh-Hant">点开【文件】\【首选项】\【对象】，或直接快捷键<span class="la">Ctrl+Shift+J</span></div>

<svg class="wmk" viewBox="0 0 90 90" aria-hidden="true">
  <polygon points="45,2 81,23 81,65 45,86 9,65 9,23" fill="#5cbcf2" opacity=".82"/>
  <path d="M45 2l36 21-14 8-22-13-22 13v16L9 65V23z" fill="#a9dcf8" opacity=".7"/>
  <polygon points="45,28 63,38 45,48 27,38" fill="#e8f6fe" opacity=".9"/>
  <polygon points="27,38 45,48 45,68 27,58" fill="#a5dcfa"/>
  <polygon points="63,38 45,48 45,68 63,58" fill="#72c6f4"/>
  <path d="M9 65l36-1 22-8" stroke="#fff" stroke-width="1.500" fill="none" opacity=".8"/>
</svg>
<div class="wtxt">3D世界网</div>
<div class="tip">显示桌面</div>
</body>
</html>
```

FILE: styles.css
```css
*{box-sizing:border-box}
html,body{margin:0;padding:0}
body{position:relative;width:1599px;height:857px;overflow:hidden;background:#fff;color:#333;font:12px/16px "Noto Sans CJK SC","Liberation Sans",sans-serif}
i{font-style:normal}
.defs{position:absolute;width:0;height:0}
svg{display:block;flex:none;overflow:visible}
.ic{width:20px;height:20px}
.ic12{width:12px;height:12px}
.ic14{width:14px;height:14px}
.ic15{width:15px;height:15px}
.ic16{width:16px;height:16px}
.ic17{width:17px;height:17px}
.ic18{width:18px;height:18px}
.ic20{width:20px;height:20px}
.ic22{width:22px;height:22px}
.ic24{width:24px;height:24px}
.ic26{width:26px;height:26px}
.ic28{width:28px;height:28px}
.ic30{width:30px;height:30px}
.ic34{width:34px;height:34px}
.gry{--a:#eee;--b:#ddd;--c:#c8c8c8}
.car{display:block;width:0;height:0;flex:none;border:3.5px solid transparent;border-top:4px solid #333;border-bottom:0}
.car.gc{border-top-color:#aaa}
.ml3{margin-left:3px}
.ml8{margin-left:8px}

/* title */
.titlebar{display:flex;align-items:center;height:25px;background:#fff}
.nx{margin:0 3px 0 3px;width:32px;font:bold 23px/25px "Liberation Sans",sans-serif;color:#8395a5}
.sep{width:1px;height:18px;margin:0 3px;background:#d4d4d4}
.s{width:23px;display:flex;justify-content:center}
.s .ic{width:18px;height:18px}
.s-n{width:18px;display:flex;justify-content:center}
.s-n .ic{width:18px;height:18px}
.s-c{width:12px;display:flex;justify-content:center}
.s-d{width:12px;display:flex;justify-content:center;border-top:1px solid #333;height:9px;padding-top:2px;transform:scaleX(.6)}
.qt{font-size:11px;margin-right:1px;white-space:nowrap}
.qt2{margin-right:0}
.appt{width:300px;margin-left:306px;text-align:center;white-space:nowrap;font:12px/25px "Noto Sans CJK TC",sans-serif;color:#222;text-spacing-trim:space-all}
.siemens{margin-left:292px;width:62px;font:bold 12.500px/25px "Liberation Sans",sans-serif;color:#129a92;letter-spacing:.9px;white-space:nowrap}
.wc{display:flex;align-items:center;margin-left:20px}
.wmin{width:9px;height:2px;background:#555;margin:6px 0 0 8px}
.wres{width:12px;height:10px;border:1.500px solid #444;margin-left:13px;position:relative;margin-top:2px}
.wres::before{content:"";position:absolute;left:2px;top:-5px;width:11px;height:8px;border:1.500px solid #444;border-bottom:0}
.wx{margin-left:10px;font:16px/20px "DejaVu Sans",sans-serif;color:#333}

/* tabs */
.tabbar{display:flex;height:28px;background:#d8d8d8;font-size:13px;line-height:28px}
.tab{padding:0 13px;white-space:nowrap;color:#333}
.tab.file{width:80px;padding:0;text-align:center;background:#4f9db8;color:#fff}
.tab.on{width:54px;background:#fff;color:#1c7a90;padding:0 14px}
.tabr{margin-left:auto;width:510px;display:flex;align-items:center}
.sogou{width:296px;height:25px;background:#fff;border-radius:5px;display:flex;align-items:center;padding-left:6px}
.sglogo{width:18px;height:18px;border-radius:3px;background:#ee6a2c;color:#fff;font:bold 12px/18px "Noto Sans CJK SC",sans-serif;text-align:center;margin-right:3px}
.sg{width:22px;height:25px;display:flex;align-items:center;justify-content:center;color:#2f8fdc}
.sg.zh{font:bold 15px/25px "Noto Sans CJK SC",sans-serif}
.search{margin-left:2px;width:124px;height:20px;background:#fff;border:1px solid #ccc;display:flex;align-items:center;justify-content:space-between;padding:0 6px 0 2px;font-size:11px;color:#aaa}
.rb1{margin-left:10px}
.rb2{margin-left:9px}
.help{margin-left:9px;width:14px;height:14px;border-radius:50%;background:#3c78c8;color:#fff;font:bold 11px/14px "Liberation Sans",sans-serif;text-align:center}

/* ribbon */
.ribbon{display:flex;height:94px;background:#fff;border-bottom:1px solid #dcdcdc;font-size:11px}
.g{display:flex;flex-direction:column;margin:4px 0 1px;border-right:1px solid #e6e6e6}
.g1{width:143px}.g2{width:369px}.g3{width:172px}.g4{width:104px}.g5{width:52px}.g6{width:58px}.g7{width:52px}.g8{width:98px}.g9{width:29px}.g10{width:289px}.g11{width:43px}.g12{width:168px}
.g13{flex:1;border-right:0}
.gb{flex:1;display:flex;padding-top:2px;min-height:0}
.gi{flex:1;padding-top:2px;min-height:0}
.gf{height:20px;display:flex;align-items:center;padding-right:6px;color:#1f7f92;font-size:11.500px;flex:none}
.gl{flex:1;text-align:center;white-space:nowrap}
.gfl{padding-left:3px}
.gfl .gl{text-align:left}
.big{display:flex;flex-direction:column;align-items:center;white-space:nowrap}
.big span{line-height:16px}
.big .car{margin-top:5px}
.w-sk{width:42px}
.w54{width:54px}.w40{width:40px}.w38{width:38px}.w44{width:44px}.w48{width:48px}.w66{width:62px}.w76{width:68px}
.wfull{width:100%}
.pl1{padding-left:7px}.pl2{padding-left:7px}.pl3{padding-left:6px}.pl4{padding-left:4px}.pl5{padding-left:5px}.pl6{padding-left:5px}.pl7{padding-left:5px}.pl8{padding-left:5px}.pl9{padding-left:3px}.pl10{padding-left:5px}.pl12{padding-left:9px}
.skbox{margin:-1px 0 0 6px;width:66px;height:66px;border:1px solid #e2e2e2;display:grid;grid-template-columns:1fr 1fr;place-items:center}
.scr{margin-left:4px;display:flex;flex-direction:column;align-items:center;gap:14px;padding-top:6px}
.cup{width:0;height:0;border:3.500px solid transparent;border-bottom:4px solid #ccc;border-top:0}
.cov{width:7px;height:8px;border-top:1px solid #333;display:flex;justify-content:center}
.cov::after{content:"";margin-top:2px;border:3.500px solid transparent;border-top:4px solid #333;border-bottom:0}
.lst{margin-top:-5px;display:flex;flex-direction:column;flex:none}
.lst>div{height:22px;display:flex;align-items:center;gap:4px;white-space:nowrap}
.c8{margin-left:8px}.c10{margin-left:6px}.c7{margin-left:4px}
.mbox{display:flex;align-items:center;justify-content:center;width:38px;height:34px;border:1px solid #e8e8e8;border-radius:3px}
.ir{height:29.500px;display:flex;align-items:center}
.q{width:22.500px;display:flex;justify-content:center;align-items:center;flex:none}
.q .ic{width:19px;height:19px}
.pl10 .q{width:23px}
.vs{width:1px;height:22px;background:#ddd;flex:none;margin:0 1px}
.lbl{flex-direction:column;font-size:7px;line-height:8px;color:#445}
.lbl b{font-weight:bold}
.tol{flex-direction:column;font:bold 8px/8px "Liberation Sans",sans-serif;color:#333}
.tol b{font-weight:normal;font-size:7px;line-height:6px;text-align:center}
.tol b.r{color:#9a3a3a}
.fit{font:bold 8px "Liberation Sans",sans-serif;color:#3a4ab0}
.fit2{flex-direction:column;font:bold 8px/8px "Liberation Sans",sans-serif;color:#3a4ab0}
.fit2 b{font-size:6.500px;line-height:7px;white-space:nowrap}
.asl{width:86px;display:flex;flex-direction:column;flex:none}
.asr{height:34px;display:flex;align-items:center;gap:5px;white-space:nowrap;font-size:12px}
.asr.dis{color:#c4c4c4;font-size:10.500px}

/* toolbar */
.toolbar{display:flex;align-items:center;height:31px;background:#fff;border-bottom:2px solid #a4a4a4;font-size:11px}
.menuic{width:18px;height:18px;margin:0 4px 0 8px}
.mtxt{white-space:nowrap;font-size:11.500px}
.vb{width:1px;height:22px;background:#ddd;margin:0 10px 0 7px}
.vb2{margin:0 7px}
.vb3{margin:0 0 0 5px}
.cb{height:20px;border:1px solid #bbb;display:flex;align-items:center;justify-content:space-between;padding:0 8px 0 3px;color:#bbb;font-size:12px}
.cb1{width:133px;margin-right:9px}
.cb1 .car{margin-left:auto}
.cb2{width:140px;margin-right:5px}
.tb{width:24.400px;display:flex;justify-content:center;flex:none}
.tb .ic{width:18px;height:18px}
.tb-n{width:22px}
.tc{width:12px;display:flex;justify-content:center;flex:none}
.tail{margin-left:auto;margin-right:5px}

/* status */
.status{height:23px;display:flex;align-items:center;justify-content:space-between;padding:0 42px 0 2px;font-size:11px;color:#222;background:#fff}
.stat-r{display:flex}
.ms{margin-left:6px}

/* main */
.work{display:flex;height:656px}
.left{width:1079px;border-right:1px solid #555;display:flex;flex-direction:column}
.dtabs{height:22px;border-bottom:1px solid #4f9db8;flex:none}
.dtab{width:232px;height:21px;background:#4f9db8;color:#fff;display:flex;align-items:center;padding-left:5px}
.dname{margin-left:6px;font:12.500px/21px "Open Sans",sans-serif;white-space:nowrap;width:190px}
.dx{font:16px/21px "Liberation Sans",sans-serif;margin-left:5px}
.canvas{flex:1}

.panel{width:488px;padding-left:10px;display:flex;flex-direction:column;flex:none}
.phead{height:29px;display:flex;align-items:center;padding:2px 0 0 2px;font-size:11.500px;flex:none}
.pbox{width:12px;height:12px;border:1px solid #222;border-top-width:2px;margin-right:11px}
.thead{height:22px;background:#eee;border:1px solid #ddd;border-bottom:0;line-height:22px;flex:none}
.cols{width:471px;display:grid;grid-template-columns:296px 36px 24px 24.500px 23px 1fr}
.thead span{padding-left:6px;border-right:1px solid #dcdcdc;white-space:nowrap}
.thead span:first-child{padding-left:7px}
.thead span:last-child{border-right:0}
.tbody{position:relative;height:531px;flex:none;border-left:1px solid #e6e6e6;border-right:1px solid #e6e6e6;display:flex;flex-direction:column;overflow:hidden;width:471px}
.trow{height:20px;flex:none;border-bottom:1px solid #e6e6e6;margin-left:-1px}
.trow>span{border-right:1px solid #e8e8e8;display:flex;align-items:center;height:19px}
.trow>span:last-child{border-right:0}
.name{padding-left:20px}
.sec{margin-left:2px;font-size:12px}
.name2{padding-left:22px;gap:3px;color:#222}
.name2 b{font:bold 11.200px/19px "DejaVu Sans",sans-serif;margin-left:1px;white-space:nowrap}
.chk{width:12px;height:12px;border:1px solid #333;color:#c8202a;font:bold 11px/10px "DejaVu Sans",sans-serif;text-align:center;flex:none}
.cs{justify-content:center}
.fill{flex:1;background:
 linear-gradient(#e8e8e8,#e8e8e8) 295px 0/1px 100% no-repeat,
 linear-gradient(#e8e8e8,#e8e8e8) 331px 0/1px 100% no-repeat,
 linear-gradient(#e8e8e8,#e8e8e8) 355px 0/1px 100% no-repeat,
 linear-gradient(#e8e8e8,#e8e8e8) 379px 0/1px 100% no-repeat,
 linear-gradient(#e8e8e8,#e8e8e8) 402px 0/1px 100% no-repeat,
 repeating-linear-gradient(#fafafa 0 19px,#e6e6e6 19px 20px,#fff 20px 39px,#e6e6e6 39px 40px)}
.selbox{position:absolute;left:37px;right:2px;top:1px;height:20px;border-top:1px dotted #222;border-bottom:1px dotted #222;border-left:1px dotted #222}
.twig{position:absolute;left:11px;top:9px;width:9px;height:20px;border-left:1px dotted #999;border-top:1px dotted #999;border-bottom:1px dotted #999}
.blk{position:absolute;left:295px;top:0;bottom:0;width:1px;background:#111}
.hsb{height:15px;flex:none;display:flex;width:471px;padding:0 2px;background:#f0f0f0;align-items:stretch}
.hbtn{width:16px;border:1px solid #aaa;background:#ddd;display:flex;align-items:center;justify-content:center}
.hl{border:3px solid transparent;border-right:4px solid #555;border-left:0}
.hrr{border:3px solid transparent;border-left:4px solid #bbb;border-right:0}
.hth{width:364px;margin-left:2px;border:1px solid #3a6a88;border-radius:2px;background:linear-gradient(#eaf4fc,#9ccaf0 50%,#cfe6f8);font:bold 9px/13px "Liberation Sans",sans-serif;text-align:center;color:#234}
.hr{margin-left:auto;background:#eee;border-color:#ccc}
.gbar{height:5px;margin-top:4px;width:471px;background:#b8b8b8;flex:none}
.sect{height:24px;width:471px;border-bottom:2px solid #ccc;display:flex;align-items:center;justify-content:space-between;padding:0 4px 0 6px;color:#1c7084;font-size:13px;flex:none}
.s1{height:23px}

.side{width:32px;background:#d8d8d8;border-left:1px solid #999;display:grid;grid-template-rows:40px 46px 40px 40px 46px 60px 50px 58px 28px 56px 1fr;justify-items:center;align-items:center}
.side span{display:flex;width:100%;height:100%;align-items:center;justify-content:center}
.sgear{background:#e2e2e2;color:#444}
.side .sact{background:#fff;width:29px;justify-self:start}

/* canvas drawings */
.triad{position:absolute;left:520px;top:410px;width:140px;height:200px}
.tt{font:13px "Liberation Serif",serif;fill:#111}
.mini{position:absolute;left:30px;top:750px;width:70px;height:80px}
.mt{font:italic 10px "Liberation Serif",serif}
.mz{fill:#1f3fa8}
.mx{fill:#b02a2a}

/* dialog */
.dlg{position:absolute;left:700px;top:240px;width:345px;height:517px;background:#f0f0f0;border:1px solid #dadada;border-top:0;display:flex;flex-direction:column;font-size:12px}
.dt{height:24px;background:#559fb8;color:#fff;display:flex;align-items:center;padding:0 9px 0 7px;margin:0 -1px;flex:none}
.dt span{margin-left:6px;font-size:13px;flex:1}
.dt b{font:bold 15px/24px "DejaVu Sans",sans-serif}
.dbody{display:flex;padding:0 7px 0 9px;flex:none}
.dmain{width:307px;padding-top:8px}
.dtb{display:flex;align-items:flex-end;height:31px}
.dtb span{width:51px;height:28px;line-height:28px;text-align:center;background:#f0f0f0;border:1px solid #d8d8d8;border-bottom:0;margin-right:-1px}
.dtb .on{width:56px;height:32px;line-height:30px;background:#fff;border-color:#ccc;position:relative;z-index:1;margin-bottom:-1px}
.dp{height:410px;background:#fff;border:1px solid #c8c8c8;padding:0 6px}
.dr{height:30px;display:flex;align-items:center;justify-content:flex-end;position:relative}
.dr label{margin-right:auto}
.dr1{border-bottom:1px solid #d4d4d4;margin-bottom:1px}
.dr5{border-bottom:1px solid #d4d4d4}
.inp{width:82px;height:23px;border:1px solid #ccc;text-align:right;padding-right:4px;font:14px/22px "Noto Sans CJK SC",sans-serif}
.sel{height:25px;border:1px solid #ccc;display:flex;align-items:center;padding:0 5px;white-space:nowrap;background:#fff}
.sel .car{margin-left:auto}
.w133{width:133px}.w63{width:63px;margin-right:47px}.w103{width:103px}.w118{width:118px}
.w63 .car{margin-right:1px}
.sw{position:absolute;right:7px;top:5px;width:30px;height:20px;background:#c9c832;border:1px solid #7b7a2a}
.thick{width:38px;height:3px;background:#000;margin:0 5px 0 1px;flex:none}
.dh{height:25px;padding-top:3px;line-height:22px}
.dc{height:23px;display:flex;align-items:center;gap:5px}
.cbx{width:12px;height:12px;border:1px solid #888;background:linear-gradient(135deg,#ddd,#f8f8f8);flex:none}
.dl{height:30px;line-height:32px}
.dv{height:16px;line-height:16px;padding-left:9px}
.slider{height:28px;margin-left:7px;width:280px;position:relative;display:flex;align-items:center}
.slider::before{content:"";display:block;width:100%;height:4px;background:#a9a9a9}
.slider i{position:absolute;left:0;top:5px;width:9px;height:19px;background:#559fb8;border:1px solid #3c7f96}
.dmm{display:flex;justify-content:space-between;height:16px;line-height:16px;padding-left:5px}
.dscr{width:14px;margin:5px 0 0 6px;height:443px;display:flex;flex-direction:column}
.sbtn{height:16px;border:1px solid #bbb;background:linear-gradient(#fafafa,#ddd);display:flex;align-items:center;justify-content:center;flex:none}
.au{border:3px solid transparent;border-bottom:4px solid #444;border-top:0}
.sth{height:217px;margin-top:1px;background:linear-gradient(to right,#e4e4e4,#bbb);border:1px solid #bbb;flex:none}
.sd{margin-top:auto}
.dbtn{display:flex;justify-content:flex-end;gap:5px;padding:8px 15px 0 0}
.dbtn span{width:54px;height:24px;line-height:23px;text-align:center;background:#dcdcdc;border:1px solid #aaa}
.dbtn .ok{background:#6daec4;border-color:#6daec4;color:#fff}

/* annotations */
.anno{position:absolute;left:0;top:0;width:1599px;height:857px;pointer-events:none}
.note{position:absolute;white-space:nowrap;color:#e23f41;font:28.500px/36px "Noto Sans CJK TC",sans-serif;letter-spacing:.3px;text-spacing-trim:space-all}
.la{letter-spacing:1.300px}
.nt1{left:1081px;top:474px}
.nt2{left:118px;top:633px}
.wmk{position:absolute;left:1307px;top:759px;width:90px;height:90px}
.wtxt{position:absolute;left:1399px;top:774px;color:#fff;opacity:.62;font:bold 32px/42px "Noto Sans CJK SC",sans-serif;letter-spacing:8px;white-space:nowrap}
.tip{position:absolute;left:1539px;top:838px;width:60px;height:19px;background:#f4f4f4;border:1px solid #666;border-radius:2px;font-size:11.500px;line-height:18px;text-align:center}
```
